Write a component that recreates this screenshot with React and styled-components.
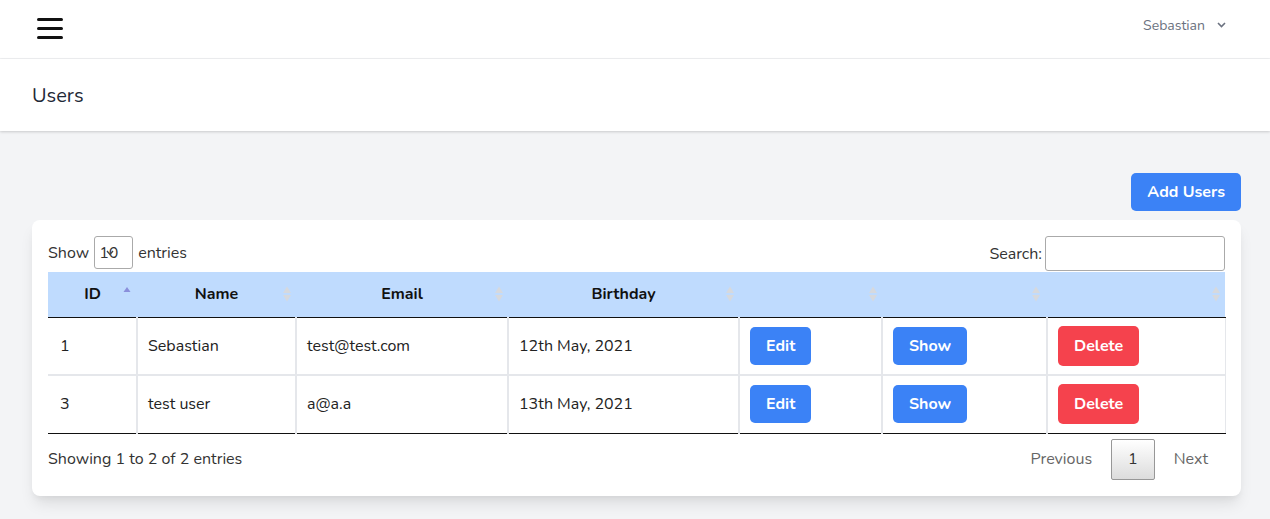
import React from "react";
import styled, { createGlobalStyle } from "styled-components";

const GlobalStyle = createGlobalStyle`
  body {
    margin: 0;
    background: #f3f4f6;
    font-family: "Nunito", "Lato", "Open Sans", sans-serif;
    color: #111827;
  }
  * { box-sizing: border-box; }
`;

const Navbar = styled.nav`
  height: 59px;
  background: white;
  border-bottom: 1px solid #f0f1f3;
  display: flex;
  align-items: center;
  justify-content: space-between;
  padding: 0 44px 0 37px;
`;

const Burger = styled.div`
  width: 26px;
  display: flex;
  flex-direction: column;
  gap: 6px;
  margin-top: -2px;

  span {
    display: block;
    height: 3px;
    border-radius: 2px;
    background: #111;
  }
`;

const UserMenu = styled.div`
  display: flex;
  align-items: center;
  gap: 12px;
  font-size: 14px;
  color: #6b7280;
  margin-top: -8px;
`;

const Header = styled.header`
  background: white;
  padding: 25px 32px 23px;
  box-shadow: 0 1px 3px rgba(0, 0, 0, 0.12), 0 1px 2px rgba(0, 0, 0, 0.06);
  position: relative;

  h2 {
    margin: 0;
    font-size: 20px;
    line-height: 24px;
    font-weight: 400;
    color: #1f2937;
  }
`;

const Main = styled.main`
  padding: 42px 29px 40px 32px;
`;

const Toolbar = styled.div`
  display: flex;
  justify-content: flex-end;
  margin-bottom: 9px;
`;

const Button = styled.button`
  font-family: inherit;
  font-size: 16px;
  font-weight: 700;
  line-height: 22px;
  color: white;
  border: none;
  border-radius: 5px;
  padding: ${(p) => (p.$tall ? "9px 16px" : "8px 16px")};
  background: ${(p) => (p.$danger ? "#f5424d" : "#3b82f6")};
  cursor: pointer;
`;

const Card = styled.div`
  background: white;
  border-radius: 8px;
  padding: 16px;
  box-shadow: 0 10px 15px -3px rgba(0, 0, 0, 0.1), 0 4px 6px -2px rgba(0, 0, 0, 0.05);
`;

const Controls = styled.div`
  display: flex;
  justify-content: space-between;
  align-items: flex-start;
  font-size: 16px;
  color: #333;
  height: 36px;
`;

const Label = styled.label`
  display: flex;
  align-items: center;
  gap: 4px;
  height: 33px;
`;

const SearchLabel = styled(Label)`
  height: 35px;
  gap: 3px;
`;

const SelectBox = styled.div`
  position: relative;
  width: 39px;
  height: 33px;
  border: 1px solid #aaa;
  border-radius: 3px;
  padding: 0 0 0 4px;
  display: flex;
  align-items: center;
  font-size: 16px;
  color: #333;
  margin: 0 1px;
`;

const Caret = styled.svg`
  position: absolute;
  left: 11px;
  top: 13px;
`;

const SearchInput = styled.input`
  width: 180px;
  height: 35px;
  border: 1px solid #aaa;
  border-radius: 3px;
  font-family: inherit;
  font-size: 16px;
  padding: 4px;
`;

const Table = styled.table`
  width: 100%;
  border-collapse: collapse;
  table-layout: fixed;
  font-size: 16px;
`;

const Th = styled.th`
  position: relative;
  background: #bfdbfe;
  height: 45px;
  font-weight: 700;
  color: #111;
  text-align: center;
  padding: 0 18px;
  border-bottom: 1px solid #111;
`;

const SortIcon = styled.span`
  position: absolute;
  right: ${(p) => p.$right}px;
  top: 50%;
  transform: translateY(-50%);
  display: flex;
`;

const Tr = styled.tr`
  & + & td {
    border-top: 2px solid #e5e7eb;
  }
  &:last-child td {
    border-bottom: 1px solid #111;
  }
`;

const Td = styled.td`
  height: 58px;
  padding: 0 10px;
  color: #222;
  border-left: 2px solid #e5e7eb;
  &:first-child {
    padding-left: 12px;
    border-left: none;
  }
  &:last-child {
    border-right: 1px solid #e5e7eb;
  }
`;

const Footer = styled.div`
  display: flex;
  justify-content: space-between;
  align-items: center;
  padding-top: 5px;
  font-size: 16px;
  color: #333;
`;

const Pager = styled.div`
  display: flex;
  align-items: center;
`;

const PageLink = styled.span`
  padding: 10px 16px;
  margin-left: 2px;
  color: #666;
  font-size: 16px;
  line-height: 19px;
  border: 1px solid ${(p) => (p.$current ? "#979797" : "transparent")};
  border-radius: 2px;
  background: ${(p) =>
    p.$current ? "linear-gradient(to bottom, #fff 0%, #dcdcdc 100%)" : "transparent"};
  ${(p) => p.$current && "color: #333; height: 41px;"}
`;

const Arrows = ({ active }) =>
  active ? (
    <svg width="8" height="16" viewBox="0 0 8 16">
      <path d="M4 1 L7.5 6 L0.5 6 Z" fill="#8a8fdb" />
    </svg>
  ) : (
    <svg width="8" height="16" viewBox="0 0 8 16">
      <path d="M4 0.5 L8 7 L0 7 Z" fill="#d6d9de" />
      <path d="M4 15.5 L8 9 L0 9 Z" fill="#d6d9de" />
    </svg>
  );

const columns = [
  { label: "ID", width: 89, active: true, right: 6 },
  { label: "Name", width: 159, right: 5 },
  { label: "Email", width: 212, right: 5 },
  { label: "Birthday", width: 231, right: 5 },
  { label: "", width: 143, right: 5 },
  { label: "", width: 165, right: 7 },
  { label: "", width: 178, right: 5 },
];

const users = [
  { id: 1, name: "Sebastian", email: "test@test.com", birthday: "12th May, 2021" },
  { id: 3, name: "test user", email: "a@a.a", birthday: "13th May, 2021" },
];

export default function App() {
  return (
    <>
      <GlobalStyle />
      <Navbar>
        <Burger>
          <span />
          <span />
          <span />
        </Burger>
        <UserMenu>
          Sebastian
          <svg width="9" height="6" viewBox="0 0 9 6">
            <path d="M1 1 L4.5 4.5 L8 1" stroke="#6b7280" strokeWidth="1.6" fill="none" />
          </svg>
        </UserMenu>
      </Navbar>
      <Header>
        <h2>Users</h2>
      </Header>
      <Main>
        <Toolbar>
          <Button>Add Users</Button>
        </Toolbar>
        <Card>
          <Controls>
            <Label>
              Show
              <SelectBox>
                10
                <Caret width="8" height="6" viewBox="0 0 8 6">
                  <path d="M1 1 L4 4.5 L7 1" stroke="#444" strokeWidth="1.3" fill="none" />
                </Caret>
              </SelectBox>
              entries
            </Label>
            <SearchLabel>
              Search:
              <SearchInput type="search" />
            </SearchLabel>
          </Controls>
          <Table>
            <colgroup>
              {columns.map((c, i) => (
                <col key={i} style={{ width: c.width }} />
              ))}
            </colgroup>
            <thead>
              <tr>
                {columns.map((c, i) => (
                  <Th key={i}>
                    {c.label}
                    <SortIcon $right={c.right}>
                      <Arrows active={c.active} />
                    </SortIcon>
                  </Th>
                ))}
              </tr>
            </thead>
            <tbody>
              {users.map((u) => (
                <Tr key={u.id}>
                  <Td>{u.id}</Td>
                  <Td>{u.name}</Td>
                  <Td>{u.email}</Td>
                  <Td>{u.birthday}</Td>
                  <Td>
                    <Button>Edit</Button>
                  </Td>
                  <Td>
                    <Button>Show</Button>
                  </Td>
                  <Td>
                    <Button $danger $tall>
                      Delete
                    </Button>
                  </Td>
                </Tr>
              ))}
            </tbody>
          </Table>
          <Footer>
            <span>Showing 1 to 2 of 2 entries</span>
            <Pager>
              <PageLink>Previous</PageLink>
              <PageLink $current>1</PageLink>
              <PageLink>Next</PageLink>
            </Pager>
          </Footer>
        </Card>
      </Main>
    </>
  );
}
